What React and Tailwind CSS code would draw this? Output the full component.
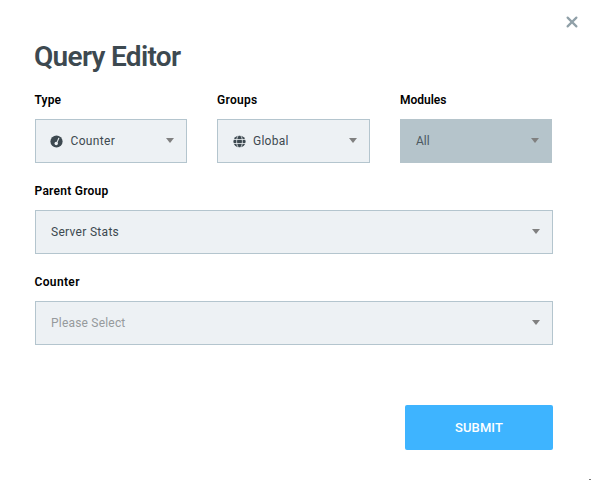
import React from "react";

function GaugeIcon() {
  return (
    <svg className="mr-[7.5px] size-[13px] shrink-0" viewBox="0 0 13 13">
      <circle cx="6.5" cy="6.5" r="6.1" fill="#3d4950" />
      <path d="M8.8 3.3L7 7.4" stroke="#edf1f4" strokeWidth="1.1" strokeLinecap="round" />
      <circle cx="6.2" cy="8.5" r="1.7" fill="#edf1f4" />
    </svg>
  );
}

function GlobeIcon() {
  return (
    <svg className="mr-[7px] ml-px size-[13px] shrink-0" viewBox="0 0 13 13">
      <circle cx="6.5" cy="6.5" r="6.1" fill="#3d4950" />
      <g fill="none" stroke="#edf1f4" strokeWidth="0.8">
        <ellipse cx="6.5" cy="6.5" rx="2.9" ry="6.4" />
        <path d="M0 4.5h13M0 8.5h13" />
      </g>
    </svg>
  );
}

function Field({ label, labelClass, value, textClass = "", icon, placeholder, disabled }) {
  const box = disabled ? "border-[#b5c4cb] bg-[#b5c4cb]" : "border-[#b4c5ce] bg-[#edf1f4]";
  const text = placeholder ? "text-[#969a9c]" : disabled ? "text-[#4b585f]" : "text-[#3d4950]";
  return (
    <div className="min-w-0">
      <div className="flex h-5 items-end">
        <span className={"whitespace-nowrap text-[12px] leading-[19px] font-semibold text-black " + labelClass}>{label}</span>
      </div>
      <div className={"mt-[9px] flex h-11 items-center border pr-3 " + box + (icon ? " pl-[14px]" : " pl-[15px]")}>
        {icon}
        <span className={"flex-1 whitespace-nowrap text-[12px] leading-[18px] " + text + " " + textClass}>{value}</span>
        <svg className="mb-px h-[5px] w-2 shrink-0" viewBox="0 0 8 5">
          <path d="M0 0h8L4 5z" fill="#808080" />
        </svg>
      </div>
    </div>
  );
}

export default function App() {
  return (
    <div className="relative h-[480px] w-[591px] overflow-hidden bg-white pt-[38px] pl-[35px] font-[Roboto,sans-serif]">
      <button aria-label="Close" className="absolute top-4 right-[13px]">
        <svg className="size-3" viewBox="0 0 12 12">
          <path d="M1.6 1.6l8.8 8.8M10.4 1.6l-8.8 8.8" stroke="#90a0a8" strokeWidth="2.2" strokeLinecap="round" />
        </svg>
      </button>
      <div className="w-[518px]">
        <h1 className="-ml-px h-[52px] whitespace-nowrap text-[28px] leading-[38px] font-semibold tracking-[-0.7px] text-[#3d4950]">
          Query Editor
        </h1>
        <div className="grid grid-cols-[152px_153px_152px] gap-x-[30px]">
          <Field label="Type" labelClass="-ml-[0.5px] tracking-[0.15px]" value="Counter" textClass="tracking-[0.35px]" icon={<GaugeIcon />} />
          <Field label="Groups" labelClass="tracking-[0.3px]" value="Global" textClass="tracking-[0.25px]" icon={<GlobeIcon />} />
          <Field label="Modules" labelClass="tracking-[0px]" value="All" disabled />
        </div>
        <div className="mt-[18px]">
          <Field label="Parent Group" labelClass="-ml-[0.5px] tracking-[0.25px]" value="Server Stats" textClass="tracking-[0.3px]" />
        </div>
        <div className="mt-[18px]">
          <Field label="Counter" labelClass="-ml-[0.5px] tracking-[0.35px]" value="Please Select" textClass="tracking-[0.2px]" placeholder />
        </div>
        <div className="mt-[60px] flex justify-end">
          <button className="h-[45px] w-[148px] rounded-[2px] bg-[#3eb4ff] text-[13px] font-medium tracking-[0.1px] text-white">
            SUBMIT
          </button>
        </div>
      </div>
      <div className="absolute right-0 bottom-0 h-px w-[2px] bg-[#777]" />
    </div>
  );
}
